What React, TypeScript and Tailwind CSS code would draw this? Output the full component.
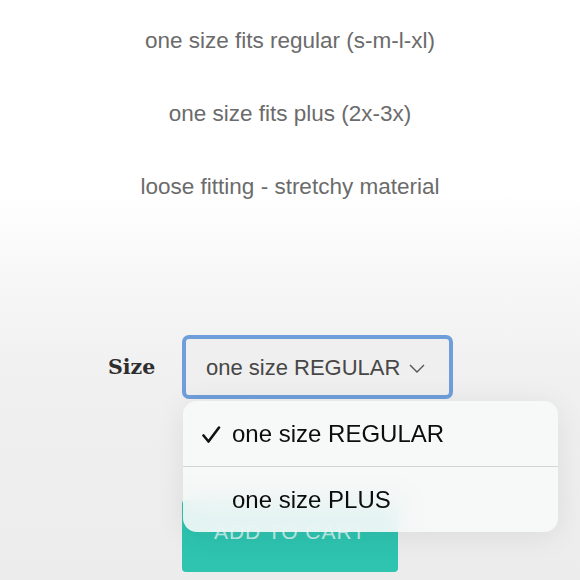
import React from 'react'

const lines = [
  'one size fits regular (s-m-l-xl)',
  'one size fits plus (2x-3x)',
  'loose fitting - stretchy material',
]

export default function App() {
  return (
    <div
      className="relative w-[580px] h-[580px] overflow-hidden bg-[linear-gradient(180deg,#ffffff_0%,#ffffff_33%,#f6f6f6_50%,#f0f0f0_65%,#ececec_100%)]"
      style={{ fontFamily: '"Liberation Sans", Arial, sans-serif' }}
    >
      {/* Description */}
      <div className="flex flex-col items-center gap-[47px] pt-[28px]">
        {lines.map((t) => (
          <p key={t} className="text-[22.5px] leading-[26px] text-[#6b6b6b]">
            {t}
          </p>
        ))}
      </div>

      {/* Size select */}
      <div className="flex items-center mt-[135px] pl-[108px]">
        <span
          className="w-[74px] text-[20.5px] text-[#2e2e2e] font-bold"
          style={{ fontFamily: '"DejaVu Serif", serif' }}
        >
          Size
        </span>
        <div className="flex items-center w-[271px] h-[64px] rounded-[7px] border-[4px] border-[#6f9edb] bg-[#efefef] pl-[20px]">
          <span className="text-[22px] text-[#474747]">one size REGULAR</span>
          <svg width="16" height="9" viewBox="0 0 16 9" className="ml-[9px] mt-[2px]">
            <path d="M1 1 L8 8 L15 1" fill="none" stroke="#555" strokeWidth="1.4" />
          </svg>
        </div>
      </div>

      {/* Add to cart */}
      <button className="ml-[182px] mt-[101px] w-[216px] h-[72px] rounded-[4px] bg-[#2ec4b0] text-white/70 text-[21px] tracking-[1px] pb-[8px]">
        ADD TO CART
      </button>

      {/* Native picker popover */}
      <div className="absolute left-[183px] top-[401px] w-[375px] h-[131px] rounded-[14px] bg-[#f7f8f8]/90 backdrop-blur-md shadow-[0_4px_30px_rgba(0,0,0,0.08)] flex flex-col overflow-hidden">
        <div className="flex items-center h-[65px] pl-[19px]">
          <svg width="19" height="18" viewBox="0 0 19 18" className="mt-[2px]">
            <path d="M1.5 9.5 L6.5 15.5 L17 1.5" fill="none" stroke="#111" strokeWidth="2.6" strokeLinecap="round" strokeLinejoin="round" />
          </svg>
          <span className="ml-[11px] text-[24px] text-[#0d0d0d]">one size REGULAR</span>
        </div>
        <div className="h-px bg-[#d4d6d6]" />
        <div className="flex items-center h-[65px] pl-[49px]">
          <span className="text-[24px] text-[#0d0d0d]">one size PLUS</span>
        </div>
      </div>
    </div>
  )
}
